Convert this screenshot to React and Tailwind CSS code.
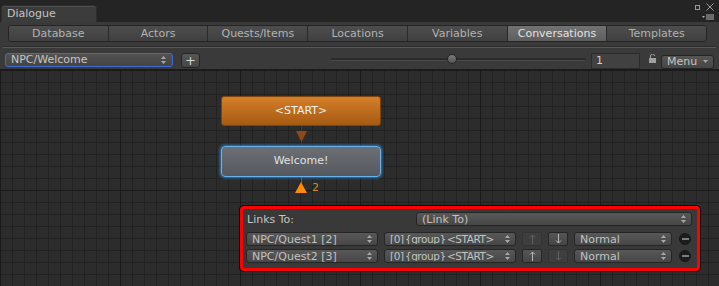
import React from 'react'

const font = "font-['DejaVu_Sans','Liberation_Sans',sans-serif]"

const UpDown = () => (
  <svg width="5" height="8" viewBox="0 0 5 8" className="shrink-0">
    <path d="M2.5 0 L5 3 L0 3 Z" fill="#a8a8a8" />
    <path d="M0 5 L5 5 L2.5 8 Z" fill="#a8a8a8" />
  </svg>
)

const Popup = ({ label, className = '', textClass = 'text-[11px]' }) => (
  <div className={`flex items-center h-[14px] rounded-[3px] border border-[#252525] bg-[linear-gradient(#585858,#474747)] pl-[5px] pr-[5px] leading-none text-[#c2c2c2] ${className}`}>
    <span className={`flex-1 whitespace-nowrap overflow-hidden ${textClass}`}>{label}</span>
    <UpDown />
  </div>
)

const Arrow = ({ dir, enabled }) => (
  <div className={`flex items-center justify-center w-[20px] h-[14px] rounded-[2px] border ${enabled ? 'border-[#262626] bg-[linear-gradient(#555555,#454545)]' : 'border-[#333333] bg-[#3e3e3e]'}`}>
    <svg width="7" height="10" viewBox="0 0 7 10" className={dir === 'down' ? 'rotate-180' : ''}>
      <path d="M3.5 1 L3.5 10 M1 3.5 L3.5 1 L6 3.5" stroke={enabled ? '#b8b8b8' : '#626262'} strokeWidth="1" fill="none" />
    </svg>
  </div>
)

const Minus = () => (
  <div className="flex items-center justify-center w-[12px] h-[12px] rounded-full bg-[#1d1d1d] border border-[#161616]">
    <div className="w-[7px] h-[2px] bg-[#7c7c7c]" />
  </div>
)

const LinkRow = ({ target, entry, upOn, downOn }) => (
  <div className="flex items-center h-[14px] gap-[6px]">
    <Popup label={target} className="w-[132px]" />
    <Popup label={entry} className="w-[132px] pl-[4px]" textClass="text-[10.5px] tracking-[-0.45px] [word-spacing:-1.5px]" />
    <Arrow dir="up" enabled={upOn} />
    <Arrow dir="down" enabled={downOn} />
    <Popup label="Normal" className="w-[98px]" />
    <div className="ml-[1px]"><Minus /></div>
  </div>
)

const tabs = ['Database', 'Actors', 'Quests/Items', 'Locations', 'Variables', 'Conversations', 'Templates']

export default function App() {
  return (
    <div className={`w-[719px] h-[286px] overflow-hidden flex flex-col bg-[#242424] ${font}`}>
      {/* window title */}
      <div className="h-[22px] flex items-end relative">
        <div className="ml-[1px] w-[96px] h-[17px] rounded-t-[3px] bg-[#3c3c3c] border-t border-x border-[#2e2e2e] shadow-[inset_0_1px_0_#4e4e4e] pl-[5px] text-[11px] leading-[16px] text-[#c4c4c4]">
          Dialogue
        </div>
        <div className="absolute right-[5px] top-[3px] flex items-center gap-[6px]">
          <div className="w-[5px] h-[5px] border-[1.5px] border-[#9a9a9a]" />
          <svg width="8" height="8" viewBox="0 0 8 8">
            <path d="M0.5 0.5 L7.5 7.5 M7.5 0.5 L0.5 7.5" stroke="#9a9a9a" strokeWidth="1" />
          </svg>
        </div>
        <svg className="absolute right-[5px] top-[14px]" width="12" height="6" viewBox="0 0 12 6">
          <path d="M0 2 L3 2 L1.5 4 Z" fill="#b0b0b0" />
          <path d="M4 1 H12 M4 3 H12 M4 5 H12" stroke="#b0b0b0" strokeWidth="1" />
        </svg>
      </div>

      {/* toolbar panel */}
      <div className="h-[48px] bg-[#3a3a3a] flex flex-col">
        <div className="ml-[8px] mt-[3px] w-[699px] h-[17px] flex rounded-[3px] border border-[#242424] overflow-hidden">
          {tabs.map((t, i) => (
            <div
              key={t}
              className={`flex-1 flex items-center justify-center text-[11px] leading-none ${i > 0 ? 'border-l border-[#2a2a2a]' : ''} ${t === 'Conversations' ? 'bg-[linear-gradient(#727272,#5e5e5e)] text-[#e2e2e2]' : 'bg-[linear-gradient(#4d4d4d,#404040)] text-[#b2b2b2]'}`}
            >
              {t}
            </div>
          ))}
        </div>
        <div className="mt-[4px] mx-[3px] h-[2px] border-t border-[#2c2c2c] bg-[#585858]" />
        <div className="flex items-start h-[23px] pt-[4px] border-b border-[#1b1b1b]">
          <div className="ml-[5px] w-[168px] h-[14px] mt-[1px] flex items-center rounded-[3px] border border-[#3f6ad0] bg-[linear-gradient(#525252,#444444)] pl-[5px] pr-[6px] text-[11px] leading-none text-[#c6c6c6]">
            <span className="flex-1">NPC/Welcome</span>
            <UpDown />
          </div>
          <div className="ml-[8px] w-[19px] h-[15px] mt-[1px] flex items-center justify-center rounded-[3px] border border-[#242424] bg-[linear-gradient(#575757,#464646)] text-[13px] leading-none text-[#d6d6d6]">
            +
          </div>
          <div className="ml-[131px] w-[255px] h-[16px] flex items-center relative">
            <div className="w-full h-[3px] rounded-full bg-[#2a2a2a] border-b border-[#4a4a4a]" />
            <div className="absolute left-[116px] top-[2px] w-[10px] h-[10px] rounded-full border border-[#262626] bg-[linear-gradient(#7a7a7a,#555555)]" />
          </div>
          <div className="ml-[5px] w-[49px] h-[16px] mt-[1px] border border-[#2b2b2b] bg-[#414141] pl-[4px] text-[11px] leading-[14px] text-[#d0d0d0]">
            1
          </div>
          <svg className="ml-[9px] mt-[2px]" width="7" height="9" viewBox="0 0 7 9">
            <path d="M1.5 4 V2 A2 2 0 0 1 5.5 2" stroke="#a0a0a0" strokeWidth="1" fill="none" />
            <rect x="0" y="4" width="7" height="5" fill="#a0a0a0" />
          </svg>
          <div className="ml-[5px] w-[53px] h-[14px] mt-[3px] flex items-center rounded-[3px] border border-[#252525] bg-[linear-gradient(#555555,#464646)] pl-[5px] pr-[5px] text-[11px] leading-none text-[#c4c4c4]">
            <span className="flex-1">Menu</span>
            <svg width="5" height="3" viewBox="0 0 5 3"><path d="M0 0 H5 L2.5 3 Z" fill="#a8a8a8" /></svg>
          </div>
        </div>
      </div>

      {/* node canvas */}
      <div className="flex-1 relative bg-[#2c2c2c] [background-image:linear-gradient(90deg,#1a1a1a_1px,transparent_1px),linear-gradient(#1a1a1a_1px,transparent_1px),linear-gradient(90deg,#222222_1px,transparent_1px),linear-gradient(#222222_1px,transparent_1px)] [background-size:120px_120px,120px_120px,12px_12px,12px_12px]">
        <svg className="absolute inset-0" width="719" height="216">
          <path d="M301.5 56 V76" stroke="#5c3414" strokeWidth="1" />
          <path d="M296 61 L307 61 L301.5 72 Z" fill="#8c4a1c" />
          <path d="M301.5 107 V113" stroke="#8a5a20" strokeWidth="1" />
          <path d="M301 112 L307 123 L295 123 Z" fill="#ff8c00" />
        </svg>
        <div className="absolute left-[312px] top-[111px] text-[11px] leading-[14px] text-[#d88a1a]">2</div>

        <div className="absolute left-[221px] top-[26px] w-[160px] h-[30px] rounded-[3px] border border-[#7a440c] bg-[linear-gradient(#d47f2a,#a65a12)] flex items-center justify-center text-[11px] text-[#f0f0f0]">
          &lt;START&gt;
        </div>
        <div className="absolute left-[221px] top-[76px] w-[160px] h-[31px] rounded-[4px] border border-[#6ab2ee] shadow-[0_0_3px_1px_#2f7fc4] bg-[linear-gradient(#6c7075,#55595f)] flex items-center justify-center text-[11px] text-[#e0e0e0]">
          Welcome!
        </div>

        {/* links panel */}
        <div className="absolute left-[240px] top-[136px] w-[460px] h-[65px] rounded-[4px] border-[3px] border-[#ff0000] ring-1 ring-black bg-[#393939] flex flex-col gap-[3px] pl-[3px] pr-[6px] pt-[3px]">
          <div className="flex items-center h-[14px] mb-[3px]">
            <span className="ml-[1px] text-[11px] leading-none text-[#c4c4c4]">Links To:</span>
            <Popup label="(Link To)" className="ml-auto mr-[-1px] w-[276px]" />
          </div>
          <LinkRow target="NPC/Quest1 [2]" entry="[0] {group} <START>" upOn={false} downOn={true} />
          <LinkRow target="NPC/Quest2 [3]" entry="[0] {group} <START>" upOn={true} downOn={false} />
        </div>
      </div>
    </div>
  )
}
